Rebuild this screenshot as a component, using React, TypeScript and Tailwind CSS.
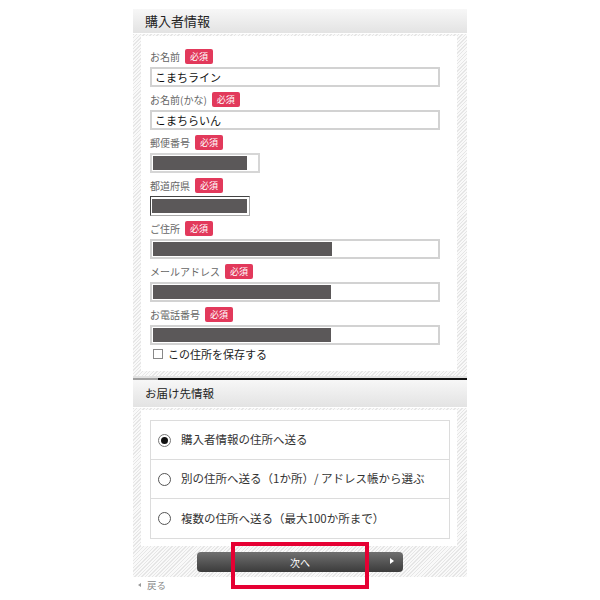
const hatch =
  'bg-[repeating-linear-gradient(135deg,#e6e6e6_0px,#e6e6e6_1px,#f9f9f9_1px,#f9f9f9_2.5px)]'

function Badge() {
  return (
    <span className="inline-flex h-[15px] items-center rounded-[2px] bg-[#e2395b] px-[5px] text-[9px] leading-none text-white">
      必須
    </span>
  )
}

function Field({
  label,
  value,
  bar,
  inputWidth = 'w-[290px]',
  kind = 'text',
}: {
  label: string
  value?: string
  bar?: string
  inputWidth?: string
  kind?: 'text' | 'select' | 'thin'
}) {
  const border =
    kind === 'select'
      ? 'border border-[#aaa] border-t-[#444] border-l-[#444]'
      : kind === 'thin'
        ? 'border-2 border-[#d6d6d6]'
        : 'border-2 border-[#d2d2d2]'
  return (
    <div className="mb-[5px]">
      <div className="mb-[3px] flex h-[15px] items-center gap-[5px]">
        <span className="text-[10px] leading-none text-[#666]">{label}</span>
        <Badge />
      </div>
      <div className={`flex h-[20px] items-center bg-white pl-[1px] ${border} ${inputWidth}`}>
        {value && <span className="pl-[2px] text-[11px] leading-none text-[#111]">{value}</span>}
        {bar && <div className={`h-[14px] bg-[#5b5859] ${bar}`} />}
      </div>
    </div>
  )
}

function Radio({ checked, label, last }: { checked?: boolean; label: string; last?: boolean }) {
  return (
    <div className={`flex h-[39px] items-center pl-[7px] ${last ? '' : 'border-b border-[#dcdcdc]'}`}>
      <span
        className={`flex h-[13px] w-[13px] items-center justify-center rounded-full border bg-white ${
          checked ? 'border-[#777]' : 'border-[#555]'
        }`}
      >
        {checked && <span className="h-[7px] w-[7px] rounded-full bg-[#111]" />}
      </span>
      <span className="ml-[10px] text-[11.5px] leading-none text-[#333]">{label}</span>
    </div>
  )
}

export default function App() {
  return (
    <div
      className="min-h-[600px] w-[600px] bg-white"
      style={{ fontFamily: '"Noto Sans CJK JP", "Noto Sans", sans-serif' }}
    >
      <div className="mx-auto w-[334px] pt-[9px]">
        {/* 購入者情報 */}
        <div className="flex h-[25px] items-center border-b border-white bg-linear-to-b from-[#f7f7f7] to-[#e3e3e3] pl-[12px] text-[13px] text-[#222]">
          購入者情報
        </div>
        <div className={`${hatch} pt-[2px] pb-[5px] pl-[8px] pr-[10px]`}>
          <div className="flex flex-col bg-white pt-[13px] pb-[10px] pl-[9px]">
            <Field label="お名前" value="こまちライン" />
            <Field label="お名前(かな)" value="こまちらいん" />
            <Field label="郵便番号" bar="w-[94px]" inputWidth="w-[110px]" kind="thin" />
            <Field label="都道府県" bar="w-[95px]" inputWidth="w-[100px]" kind="select" />
            <Field label="ご住所" bar="w-[179px]" />
            <Field label="メールアドレス" bar="w-[178px]" />
            <Field label="お電話番号" bar="w-[178px]" />
            <label className="mt-[-3px] flex h-[14px] items-center pl-[3px]">
              <span className="h-[10px] w-[10px] border border-[#888] bg-white" />
              <span className="ml-[5px] text-[11px] leading-none text-[#222]">この住所を保存する</span>
            </label>
          </div>
        </div>
        <div className="h-[2px] bg-[#e2e2e2]" />
        <div className="flex h-[2px]">
          <div className="w-[25px] bg-[#a0a0a0]" />
          <div className="flex-1 bg-[#111]" />
        </div>

        {/* お届け先情報 */}
        <div className="flex h-[28px] items-center border-b border-white bg-linear-to-b from-[#f7f7f7] to-[#e3e3e3] pl-[12px] text-[11.5px] text-[#222]">
          お届け先情報
        </div>
        <div className={`${hatch} pt-[2px] pb-[5px]`}>
          <div className="ml-[8px] mr-[10px] bg-white pt-[10px] pb-[7px] pl-[9px] pr-[7px]">
            <div className="border border-[#dcdcdc]">
              <Radio checked label="購入者情報の住所へ送る" />
              <Radio label="別の住所へ送る（1か所）/ アドレス帳から選ぶ" />
              <Radio label="複数の住所へ送る（最大100か所まで）" last />
            </div>
          </div>
          <div className="relative mx-auto mt-[6px] w-[206px]">
            <button className="relative flex h-[20px] w-full items-center justify-center rounded-[4px] bg-linear-to-b from-[#707070] to-[#3c3c3c] text-[10px] text-white">
              次へ
              <span className="absolute right-[9px] top-[6px] h-0 w-0 border-y-[3px] border-l-[4px] border-y-transparent border-l-white" />
            </button>
            <div className="absolute left-[34px] top-[-10px] h-[47px] w-[138px] border-[4px] border-[#e60033]" />
          </div>
        </div>
        <div className="flex h-[14px] items-center pl-[5px] pt-[2px] text-[9.5px] text-[#888]">
          <span className="h-0 w-0 border-y-[2px] border-r-[3px] border-y-transparent border-r-[#999]" />
          <span className="ml-[6px]">戻る</span>
        </div>
      </div>
    </div>
  )
}
